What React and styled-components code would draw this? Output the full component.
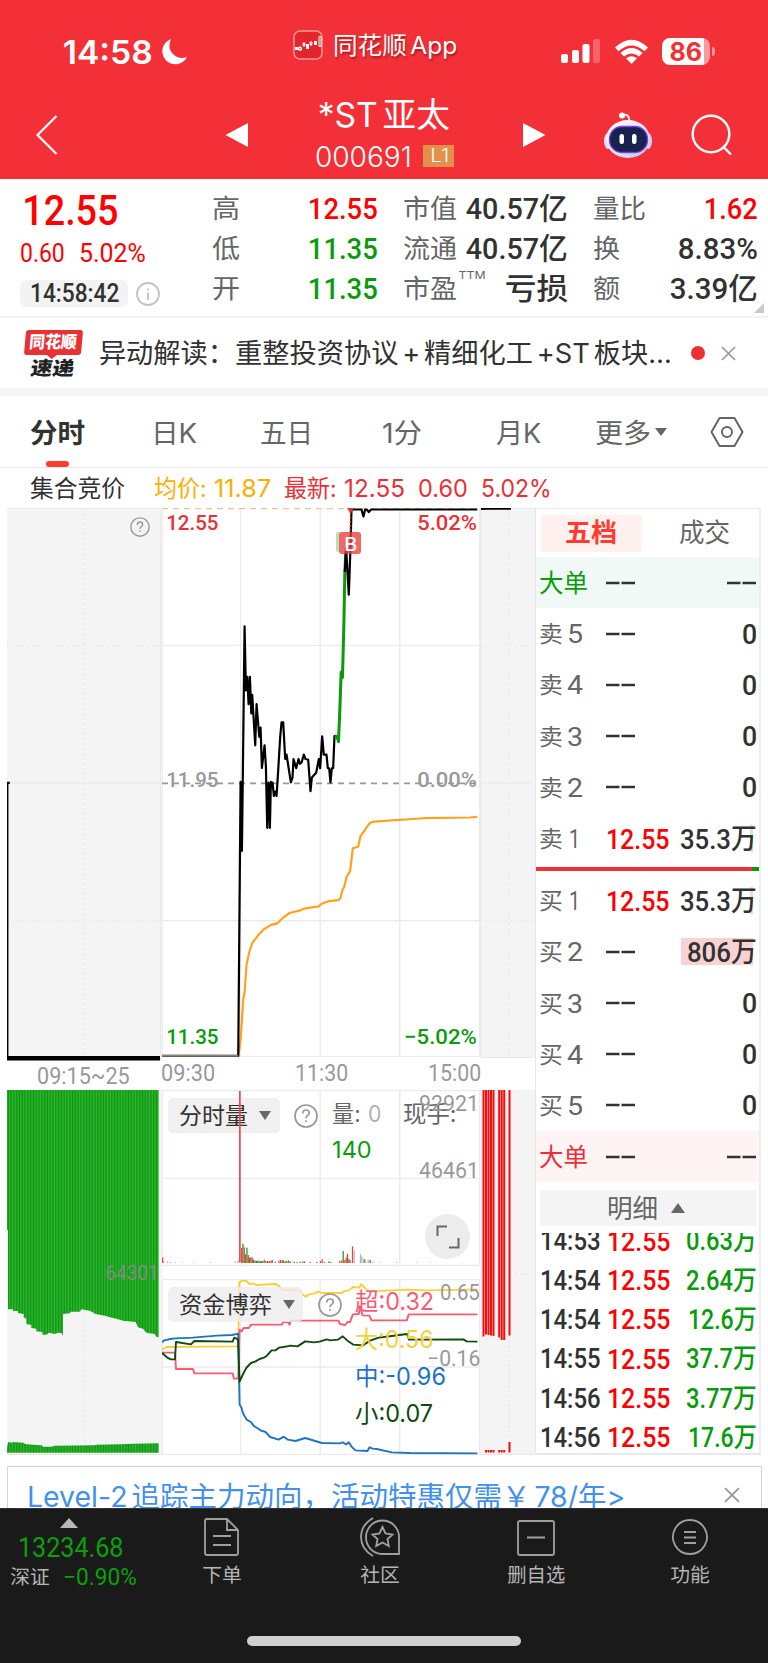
import React, { useLayoutEffect, useRef, useState } from "react";
import styled, { createGlobalStyle } from "styled-components";

const SANS = `Inter, "Noto Sans CJK SC", sans-serif`;
const DIN = `Roboto, "Noto Sans CJK SC", sans-serif`;
const RED = "#ff0000";
const CRIMSON = "#ec2f35";
const GREEN = "#089c0c";
const DARK = "#323232";
const GREY = "#666666";

const Global = createGlobalStyle`
  * { box-sizing: border-box; }
  body { margin: 0; background: #fff; font-family: ${SANS}; color: ${DARK}; }
  svg { display: block; flex: none; }
`;

/* Text squeezed or stretched to an exact column width */
const FitBox = styled.span`
  display: block;
  flex: none;
  width: ${(p) => p.$w}px;
  height: ${(p) => p.$size}px;
  margin-left: ${(p) => p.$ml || 0}px;
  font-family: ${(p) => (p.$din ? DIN : SANS)};
  font-size: ${(p) => p.$size}px;
  font-weight: ${(p) => p.$weight || 400};
  line-height: ${(p) => p.$size}px;
  color: ${(p) => p.$color || "inherit"};
`;
const FitInner = styled.span`
  display: inline-block;
  white-space: pre;
  word-spacing: -0.14em;
  transform-origin: 0 50%;
`;
function Fit({ w, size, ml, weight, color, din, dy = 1, children }) {
  const ref = useRef(null);
  const [scale, setScale] = useState(1);
  useLayoutEffect(() => {
    setScale((w + size * 0.08) / ref.current.offsetWidth);
  }, [w, size]);
  return (
    <FitBox $w={w} $size={size} $ml={ml} $weight={weight} $color={color} $din={din}>
      <FitInner ref={ref} style={{ transform: `translate(${-size * 0.04}px, ${dy}px) scaleX(${scale})` }}>
        {children}
      </FitInner>
    </FitBox>
  );
}

const Page = styled.div`
  width: 768px;
  height: 1663px;
  overflow: hidden;
  display: flex;
  flex-direction: column;
`;
const Line = styled.div`
  display: flex;
  align-items: center;
  height: ${(p) => p.$h}px;
  flex: none;
  padding-left: ${(p) => p.$pl || 0}px;
  margin-top: ${(p) => p.$mt || 0}px;
`;
const Gap = styled.div`
  flex: none;
  width: ${(p) => p.$w}px;
`;

/* ---------- header ---------- */
const Header = styled.header`
  height: 179px;
  flex: none;
  background: #f33037;
  color: #fff;
`;
const StatusBar = styled.div`
  display: flex;
  height: 91px;
  padding: 12px 0 0 64px;
  align-items: center;
`;
const AppTag = styled.div`
  display: flex;
  align-items: center;
  margin: -14px 0 0 106px;
  text-shadow: 1px 2px 2px rgba(90, 0, 0, 0.45);
`;
const Battery = styled.div`
  display: flex;
  align-items: center;
  justify-content: center;
  flex: none;
  width: 48px;
  height: 27px;
  margin-left: 13px;
  border-radius: 8px;
  background: linear-gradient(90deg, #fff 87%, #fa9a9e 87%);
  color: #f33037;
`;
const Nub = styled.div`
  width: 3px;
  height: 9px;
  margin-left: 2px;
  border-radius: 0 4px 4px 0;
  background: #fa9a9e;
`;
const NavBar = styled.div`
  display: flex;
  height: 88px;
  padding-left: 36px;
  align-items: center;
`;
const TitleBlock = styled.div`
  flex: none;
  width: 207px;
  display: flex;
  flex-direction: column;
`;
const Level = styled.div`
  display: flex;
  align-items: center;
  width: 31px;
  height: 22px;
  margin-left: 12px;
  padding-left: 8px;
  background: #e2904a;
`;
const NavTools = styled.div`
  display: flex;
  align-items: center;
  gap: 38px;
  margin-left: 57px;
`;

function StatusIcons() {
  return (
    <svg width="88" height="26" viewBox="0 0 88 26">
      <g fill="#fff">
        <rect x="0" y="15" width="7" height="9" rx="2" />
        <rect x="11" y="11" width="7" height="13" rx="2" />
        <rect x="21.500" y="5" width="7" height="19" rx="2" />
        <rect x="32" y="0" width="7" height="24" rx="2" opacity=".25" />
        <path d="M54 8.500Q70.500-7 87 8.500L83.500 12.200Q70.500 1 57.500 12.200Z" />
        <path d="M59.500 14Q70.500 4 81.500 14L78 17.500Q70.500 11.500 63 17.500Z" />
        <path d="M65 19.300Q70.500 15 76 19.300L70.500 25Z" />
      </g>
    </svg>
  );
}
function AppIcon() {
  return (
    <svg width="30" height="30" viewBox="0 0 30 30">
      <rect x="1" y="1" width="28" height="28" rx="6" fill="#e5252c" stroke="#f99" strokeWidth="1.500" />
      <g fill="#fff">
        <rect x="2" y="17" width="3" height="3" />
        <rect x="13" y="14" width="3" height="5" />
        <rect x="21" y="11" width="3" height="4" />
      </g>
      <g fill="none" stroke="#fff" strokeWidth="1">
        <path d="M7 16v5M5.500 17.500h3v2.500h-3ZM11 12v5M10 13.500h2v2h-2ZM18 12v4M17 12h2v2.500h-2ZM26 6.500h2v10h-2Z" />
      </g>
    </svg>
  );
}
function Robot() {
  return (
    <svg width="50" height="48" viewBox="0 0 50 48">
      <defs>
        <linearGradient id="shell" x1="0" y1="0" x2="1" y2="1">
          <stop offset="0" stopColor="#fff" />
          <stop offset="1" stopColor="#c3c8f0" />
        </linearGradient>
      </defs>
      <path d="M19 4q8-2 7 7" fill="none" stroke="#dfe1f8" strokeWidth="2" />
      <circle cx="19" cy="4.500" r="3" fill="#fff" />
      <ellipse cx="5" cy="30" rx="4" ry="8" fill="#d9dcf6" />
      <ellipse cx="45" cy="30" rx="4" ry="8" fill="#c9cdf2" />
      <ellipse cx="25" cy="28" rx="22" ry="19" fill="url(#shell)" />
      <rect x="6.500" y="15.500" width="38" height="26" rx="12.500" fill="#19224e" stroke="#7b3fe4" strokeWidth="1.300" />
      <rect x="16.500" y="23" width="4.500" height="10" rx="2.200" fill="#fff" />
      <rect x="29" y="23" width="4.500" height="10" rx="2.200" fill="#fff" />
    </svg>
  );
}

/* ---------- quote ---------- */
const Quote = styled.section`
  position: relative;
  display: flex;
  height: 139px;
  flex: none;
  border-bottom: 2px solid #f1f1f1;
`;
const QuoteMain = styled.div`
  width: 213px;
  padding: 9px 0 0 21px;
`;
const QuoteCols = styled.div`
  padding-top: 9px;
`;
const TimePill = styled.div`
  display: flex;
  align-items: center;
  width: 108px;
  height: 27px;
  margin-left: -1px;
  padding-left: 11px;
  border-radius: 7px;
  background: #f3f3f3;
`;
const Ttm = styled.div`
  align-self: flex-start;
  margin: 1px 0 0 3px;
  width: 27px;
`;
const Corner = styled.div`
  position: absolute;
  right: 4px;
  bottom: 3px;
  border-left: 10px solid transparent;
  border-bottom: 10px solid #c8c8c8;
`;

/* ---------- news ---------- */
const News = styled.section`
  display: flex;
  align-items: center;
  height: 78px;
  flex: none;
  padding: 0 0 0 25px;
  border-bottom: 8px solid #f4f4f4;
`;
const NewsBadge = styled.div`
  width: 57px;
  padding-top: 0;
`;
const BadgeTop = styled.div`
  position: relative;
  height: 25px;
  padding: 3px 0 0 5px;
  border-radius: 3px;
  background: #e83035;
  transform: skewX(-5deg);
  &::after {
    content: "";
    position: absolute;
    left: 23px;
    top: 25px;
    border: solid transparent;
    border-width: 0 5px;
    border-top: 4px solid #e83035;
  }
`;
const BadgeLow = styled.div`
  padding: 3px 0 0 7px;
  transform: skewX(-9deg);
`;
const Dot = styled.i`
  width: 14px;
  height: 14px;
  margin-left: 20px;
  border-radius: 50%;
  background: #ec2f32;
`;
const Cross = ({ size = 15 }) => (
  <svg width={size} height={size} viewBox="0 0 15 15">
    <path d="M1 1L14 14M14 1L1 14" stroke="#999" strokeWidth="1.700" fill="none" />
  </svg>
);

/* ---------- tabs ---------- */
const Tabs = styled.nav`
  position: relative;
  display: flex;
  align-items: center;
  height: 72px;
  flex: none;
  padding: 1px 0 0 31px;
  border-bottom: 1px solid #e9e9e9;
  color: ${GREY};
`;
const Underline = styled.i`
  position: absolute;
  left: 46px;
  bottom: 0;
  width: 23px;
  height: 6px;
  border-radius: 3px;
  background: #ff3a30;
`;
const Caret = styled.i`
  flex: none;
  width: 0;
  height: 0;
  margin-left: ${(p) => p.$ml || 0}px;
  border: solid transparent;
  border-width: 0 ${(p) => p.$s || 6.5}px;
  ${(p) => (p.$up ? "border-bottom" : "border-top")}: ${(p) => p.$h || 9}px solid ${(p) => p.$c || "#666"};
`;

/* ---------- charts ---------- */
const Board = styled.main`
  display: flex;
  height: 948px;
  flex: none;
  padding-left: 7px;
`;
const Column = styled.div`
  display: flex;
  flex-direction: column;
  width: ${(p) => p.$w}px;
  flex: none;
`;
const Pane = styled.div`
  position: relative;
  flex: none;
  height: ${(p) => p.$h}px;
  background: ${(p) => (p.$grey ? "#f4f4f4" : "#fff")};
`;
const Pin = styled.div`
  position: absolute;
  left: ${(p) => p.$x}px;
  top: ${(p) => p.$y}px;
  display: flex;
`;
const Picker = styled.div`
  position: absolute;
  left: 6px;
  top: 8px;
  display: flex;
  align-items: center;
  width: ${(p) => p.$w}px;
  height: 35px;
  padding-left: 12px;
  border-radius: 5px;
  background: rgba(236, 236, 236, 0.8);
`;
const Expand = styled.div`
  position: absolute;
  left: 263px;
  top: 124px;
  display: flex;
  align-items: center;
  justify-content: center;
  width: 45px;
  height: 45px;
  border-radius: 50%;
  background: #ececec;
`;
const Marker = styled.div`
  position: absolute;
  left: 177px;
  top: 24px;
  display: flex;
  align-items: center;
  justify-content: center;
  width: 22px;
  height: 22px;
  border-radius: 3px;
  background: rgba(236, 60, 62, 0.78);
  box-shadow: -4px -1px 0 -1px rgba(90, 190, 90, 0.45);
`;
const Help = ({ s = 24 }) => (
  <svg width={s} height={s} viewBox="0 0 24 24" fill="none" stroke="#999" strokeWidth="1.700">
    <circle cx="12" cy="12" r="11" />
    <path d="M8.800 9.500q0-3.500 3.200-3.500t3.200 3q0 1.700-1.700 2.600-1.500.900-1.500 2.600M12 16.300v1.700" />
  </svg>
);
const Plot = ({ box, h, w = 318, children }) => (
  <svg width={w} height={h} viewBox={box} preserveAspectRatio="none" fill="none">
    {children}
  </svg>
);
const Trace = ({ d, c, w = 2.2 }) => (
  <polyline points={d} stroke={c} strokeWidth={w} strokeLinejoin="round" vectorEffect="non-scaling-stroke" />
);
const Grid = ({ d, c = "#ebebeb", dash, w = 1.4 }) => (
  <path d={d} stroke={c} strokeWidth={w} strokeDasharray={dash} vectorEffect="non-scaling-stroke" />
);

const PRICE =
  "35,1502 264,1502 271,762 275,948 283,342 287,515 291,478 295,552 299,478 303,577 306,527 315,663 319,552 327,640 331,615 335,724 343,663 347,720 351,886 355,764 359,886 362,762 367,764 371,800 375,788 379,800 384,730 390,640 394,601 399,601 405,700 409,688 422,763 427,750 430,700 438,725 445,700 449,713 454,710 461,688 466,700 474,702 481,787 485,750 498,737 506,700 510,725 516,639 521,688 529,688 533,725 537,725 541,763 545,725 549,725 553,638 558,638";
const SURGE = "554,638 561,640 565,653 569,570 573,465 577,480 581,345 584,200 587,140";
const LIMIT = "584,195 588,130 596,256 601,130 604,26 634,26 640,45 645,26 650,26 656,33 663,26 982,26";
const AVERAGE =
  "264,1502 271,1460 279,1350 283,1330 289,1255 297,1222 306,1197 325,1175 341,1160 362,1148 381,1144 397,1130 418,1116 450,1109 462,1104 506,1098 514,1091 536,1084 565,1081 571,1076 577,1054 582,1046 590,1017 600,1003 608,941 624,937 631,909 650,884 659,873 672,869 820,860 960,858 982,856";
const BIG = "35,270 48,262 264,260 267,68 276,63 288,64 298,73 309,71 318,76 378,73 386,79 397,90 445,92 457,104 466,111 477,104 494,101 504,96 516,100 574,100 586,93 596,93 608,82 628,84 632,74 646,86 652,95 775,90 830,92 982,89";
const HUGE = "35,279 74,279 77,328 128,328 132,341 247,341 251,357 264,357 268,210 274,215 280,205 296,205 302,195 395,195 399,187 413,187 418,195 421,183 565,183 569,193 585,196 592,187 600,187 608,164 626,163 630,140 637,167 658,168 664,182 770,182 776,164 982,164";
const MID = "35,248 42,242 60,238 75,236 128,234 200,228 245,226 264,222 268,434 274,445 278,460 289,480 302,487 310,498 331,512 346,517 360,532 385,540 401,531 413,540 436,544 465,535 485,541 515,550 569,551 577,548 589,554 596,548 605,562 616,572 652,574 658,563 668,567 680,568 725,578 780,580 982,581";
const SMALL = "35,280 50,293 61,299 74,299 77,247 122,254 132,244 247,246 252,234 263,239 268,366 277,346 288,325 302,310 316,305 328,298 343,293 350,288 364,272 376,272 386,264 400,262 410,260 421,258 442,260 465,245 492,248 508,246 530,239 541,242 563,240 578,230 592,243 610,255 638,257 660,243 686,234 725,229 771,223 777,240 940,239 950,245 982,246";

const BARS = [
  [37, 17, 0], [40, 6, 1], [52, 5, 1], [60, 3, 1], [75, 2, 1], [95, 2, 1], [130, 2, 1], [180, 2, 1], [254, 5, 1], [262, 6, 1], [267, 15, 1],
  [274, 45, 0], [278, 58, 2], [282, 47, 0], [286, 26, 0], [290, 46, 2], [294, 24, 0], [298, 16, 2], [302, 18, 0], [306, 16, 0], [310, 10, 2], [314, 7, 0], [318, 7, 2], [322, 6, 2], [326, 7, 0], [330, 5, 2], [334, 6, 2], [338, 5, 2], [342, 10, 0], [347, 6, 0], [352, 6, 2], [357, 6, 0], [362, 7, 0], [366, 9, 0], [375, 4, 2], [386, 7, 0], [391, 9, 0], [396, 8, 2], [400, 8, 0], [405, 5, 2], [410, 6, 2], [415, 8, 0], [420, 5, 2], [432, 4, 2], [440, 3, 0], [450, 4, 2], [458, 5, 0], [463, 5, 0], [480, 3, 2], [500, 3, 0], [511, 6, 0], [516, 11, 0], [523, 3, 2], [536, 5, 2], [542, 3, 0], [569, 7, 0], [575, 8, 0], [579, 36, 2], [584, 9, 0], [588, 17, 0], [592, 28, 0], [596, 12, 2], [600, 8, 0], [607, 50, 0], [612, 38, 1], [631, 27, 1], [635, 20, 1], [642, 12, 2], [646, 8, 1], [654, 10, 1], [660, 9, 2], [668, 4, 1], [690, 2, 1], [740, 3, 1], [800, 2, 1], [840, 2, 1],
];
const BAR_COLORS = ["#f03e43", "#b4b4b4", "#12a018"];

const AUCTION_EDGE =
  "22,150 22,570 25,570 25,808 40,808 40,813 55,813 55,819 72,822 72,832 80,836 80,852 95,855 95,864 110,866 110,874 128,876 128,884 140,884 148,878 165,882 175,878 187,880 187,885 190,885 190,822 210,820 214,815 240,815 246,808 270,812 288,822 320,828 330,832 350,836 370,842 408,846 415,862 430,866 440,878 465,882 470,890 477,892 477,150";
const AUCTION_FOOT =
  "22,1238 22,1225 25,1206 38,1208 40,1206 72,1208 76,1212 100,1214 126,1216 130,1220 155,1220 165,1217 285,1216 290,1214 360,1213 400,1211 477,1210 477,1238";

const FlowTag = ({ y, w, c, children }) => (
  <Pin $x={194} $y={y}>
    <Fit w={w} size={24} color={c}>{children}</Fit>
  </Pin>
);
const Scale = ({ x, y, w, c = "#999", size = 21, weight = 500, children }) => (
  <Pin $x={x} $y={y}>
    <Fit w={w} size={size} din weight={weight} color={c}>{children}</Fit>
  </Pin>
);

function AuctionColumn() {
  return (
    <Column $w={155}>
      <Pane $h={553} $grey>
        <svg width="155" height="553" viewBox="0 0 155 553" fill="none">
          <path d="M0 .5H153.500V549M0 275H153" stroke="#e9e9e9" />
          <path d="M77.500 0V549M0 138H153M0 413H153" stroke="#e6e6e6" strokeDasharray="2 3" />
          <path d="M2 276V274.500H.700V548" stroke="#000" strokeWidth="1.500" />
          <path d="M0 550.300H153" stroke="#000" strokeWidth="4.500" />
        </svg>
        <Pin $x={123} $y={9}><Help s={20} /></Pin>
      </Pane>
      <Line $h={29} $pl={31}>
        <Fit w={91} size={23} din color="#999">09:15~25</Fit>
      </Line>
      <Pane $h={365} $grey>
        <svg width="153" height="365" viewBox="22 150 459 1095" fill="none">
          <defs>
            <pattern id="bars" width="4.670" height="20" patternUnits="userSpaceOnUse">
              <rect width="4.670" height="20" fill="#059b08" />
              <rect width="1.500" height="20" fill="#55bd58" />
            </pattern>
          </defs>
          <path d="M254 150V1245" stroke="#e3e3e3" strokeWidth="3" strokeDasharray="6 9" />
          <path d="M22 1244H481" stroke="#e4e4e4" strokeWidth="4" />
          <polygon points={AUCTION_EDGE} fill="url(#bars)" />
          <polygon points={AUCTION_FOOT} fill="url(#bars)" />
        </svg>
        <Scale x={99} y={172} w={52} c="#808c80" weight={400}>64301</Scale>
      </Pane>
    </Column>
  );
}

function MainColumn() {
  return (
    <Column $w={318}>
      <Pane $h={549}>
        <Plot box="35 22 955 1483" h={549}>
          <Grid d="M36 23V1504H989V23M271 23V1504M510 23V1504M749 23V1504M35 393H989M35 1137H989" />
          <Grid d="M35 766H989" c="#999" dash="6 5" w={1.8} />
          <Grid d="M35 23H989" c="#e3c69c" dash="6 5" w={1.8} />
          <Trace d={AVERAGE} c="#ffa21f" />
          <Trace d={PRICE} c="#000" />
          <Grid d="M35 1502H264" c="#8d8370" w={1.8} />
          <Trace d={SURGE} c="#0a9a0a" w={3} />
          <Trace d={LIMIT} c="#000" />
          <Grid d="M601 24V90" c="#e22" dash="2 2" />
          <path d="M591 22H611L601 38Z" fill="#e8363c" />
        </Plot>
        <Marker><Fit w={11} size={19} weight={500} color="#fff">B</Fit></Marker>
        <Scale x={5} y={4} w={51} c={CRIMSON}>12.55</Scale>
        <Scale x={256} y={4} w={58} c={CRIMSON}>5.02%</Scale>
        <Scale x={5} y={261} w={51}>11.95</Scale>
        <Scale x={256} y={261} w={58}>0.00%</Scale>
        <Scale x={5} y={518} w={51} c={GREEN}>11.35</Scale>
        <Scale x={243} y={518} w={71} c={GREEN}>−5.02%</Scale>
      </Pane>
      <Line $h={31}>
        <Fit w={52} size={23} din color="#999">09:30</Fit>
        <Fit ml={82} w={51} size={23} din color="#999">11:30</Fit>
        <Fit ml={82} w={51} size={23} din color="#999">15:00</Fit>
      </Line>
      <Line $h={2} />
      <Pane $h={176}>
        <Plot box="35 60 955 528" h={176}>
          <Grid d="M36 62V586H989V62ZM271 62V586M510 62V586M749 62V586M35 325H989" />
          {BARS.map(([x, h, c]) => (
            <rect key={x} x={x - 1.8} y={579 - h} width="3.800" height={h} fill={BAR_COLORS[c]} />
          ))}
        </Plot>
        <Picker $w={112}>
          <Fit w={67} size={23}>分时量</Fit>
          <Caret $ml={12} />
        </Picker>
        <Pin $x={77} $y={1}>
          <svg width="2" height="171"><rect width="1.700" height="171" fill="#f04a50" /></svg>
        </Pin>
        <Pin $x={132} $y={14}><Help /></Pin>
        <Pin $x={171} $y={12}>
          <Fit w={27} size={23} color={GREY}>量:</Fit>
          <Fit ml={9} w={12} size={23} color="#b0b0b0">0</Fit>
          <Fit ml={23} w={52} size={23} color={GREY}>现手:</Fit>
        </Pin>
        <Scale x={258} y={1} w={58} size={22.5} weight={400}>92921</Scale>
        <Pin $x={171} $y={48}><Fit w={38} size={23} color={GREEN}>140</Fit></Pin>
        <Scale x={258} y={68} w={58} size={22.5} weight={400}>46461</Scale>
        <Expand>
          <svg width="24" height="24" fill="none" stroke="#666" strokeWidth="2">
            <path d="M1.500 11V1.500H11M22.500 13V22.500H13" />
          </svg>
        </Expand>
      </Pane>
      <Line $h={13} />
      <Pane $h={176}>
        <Plot box="35 58 955 528" h={176}>
          <Grid d="M36 60V584H989V60ZM271 60V584M510 60V584M749 60V584M35 322H989" />
          <Trace d={BIG} c="#f8d038" w={1.9} />
          <Trace d={HUGE} c="#fb5a70" w={1.9} />
          <Trace d={MID} c="#1d74c3" w={1.9} />
          <Trace d={SMALL} c="#0d4c0d" w={1.9} />
        </Plot>
        <Picker $w={135}>
          <Fit w={91} size={23}>资金博弈</Fit>
          <Caret $ml={12} />
        </Picker>
        <Pin $x={156} $y={14}><Help /></Pin>
        <Scale x={279} y={2} w={38} weight={400} size={22}>0.65</Scale>
        <Scale x={266} y={68} w={51} weight={400} size={22}>−0.16</Scale>
        <FlowTag y={10} w={77} c="#fb5a70">超:0.32</FlowTag>
        <FlowTag y={48} w={77} c="#f8d038">大:0.56</FlowTag>
        <FlowTag y={85} w={89} c="#1d74c3">中:-0.96</FlowTag>
        <FlowTag y={122} w={76} c="#0d4c0d">小:0.07</FlowTag>
      </Pane>
    </Column>
  );
}

const AFTER_BARS = [
  [482.5, 1336.5], [485, 1334.500], [487.5, 1335], [490, 1335.500], [492.5, 1336], [498.2, 1337.500], [500.7, 1340], [503.2, 1340], [508.500, 1335.500],
];
function AfterColumn() {
  return (
    <Column $w={55}>
      <Pane $h={550} $grey>
        <svg width="55" height="550" fill="none">
          <path d="M0 .5H53M0 275H53M.5 0V550M0 549.500H53" stroke="#e9e9e9" />
          <path d="M29 0V550M0 138H53M0 413H53" stroke="#e6e6e6" strokeDasharray="2 3" />
          <path d="M1 .800L12 .300L31 .600" stroke="#000" strokeWidth="2.500" />
        </svg>
      </Pane>
      <Line $h={32} />
      <Pane $h={365} $grey>
        <svg width="55" height="365" viewBox="480 1090 55 365" fill="none">
          <path d="M480 1274H533" stroke="#e3e3e3" strokeDasharray="2 3" />
          <path d="M509 1340V1454" stroke="#e3e3e3" strokeDasharray="2 3" />
          <path d="M480 1454.500H534" stroke="#e4e4e4" />
          {AFTER_BARS.map(([x, y], i) => (
            <g key={x} fill="#fa0a0a">
              <rect x={x} y="1090" width="2" height={y - 1090} />
              {i > 0 && <rect x={x} y={i === 8 ? 1442 : 1450} width="2" height={i === 8 ? 10.5 : 2.5} />}
            </g>
          ))}
        </svg>
      </Pane>
    </Column>
  );
}

/* ---------- order book ---------- */
const Book = styled.aside`
  display: flex;
  flex-direction: column;
  width: 226px;
  height: 947px;
  border: 1px solid #e6e6e6;
  border-right: 2px solid #eee;
  border-bottom: 2px solid #e9e9e9;
`;
const BookTabs = styled.div`
  display: flex;
  align-items: center;
  height: 48px;
  flex: none;
  padding-left: 5px;
`;
const ActiveTab = styled.div`
  display: flex;
  align-items: center;
  width: 101px;
  height: 37px;
  padding-left: 25px;
  border-radius: 4px;
  background: #fff1f0;
`;
const BookRow = styled.div`
  position: relative;
  display: flex;
  align-items: center;
  justify-content: space-between;
  height: 51.200px;
  flex: none;
  padding: 0 3px 0 4px;
  background: ${(p) => p.$bg || "transparent"};
`;
const Cells = styled.div`
  display: flex;
  align-items: center;
`;
const Depth = styled.i`
  position: absolute;
  right: 6px;
  top: 12px;
  width: ${(p) => p.$w}px;
  height: 27px;
  background: ${(p) => p.$c};
`;
const Front = styled.div`
  position: relative;
`;
const Ratio = styled.div`
  height: 4px;
  flex: none;
  margin: 3px 0 4px;
  background: linear-gradient(90deg, #ef3035 216px, #0a9a0a 216px);
`;
const Detail = styled.div`
  display: flex;
  align-items: center;
  height: 36px;
  flex: none;
  margin: 8px 3px 7px 4px;
  padding-left: 68px;
  background: #f4f4f4;
`;
const Trades = styled.div`
  height: 220px;
  overflow: hidden;
`;
const Trade = styled.div`
  display: flex;
  align-items: center;
  justify-content: space-between;
  height: 39.300px;
  padding: 0 3px 0 5px;
  &:first-child { margin-top: -12px; }
`;

const Dashes = () => (
  <svg width="29" height="4"><path d="M0 2H13.500M15.500 2H29" stroke={DARK} strokeWidth="2.600" /></svg>
);
function Order({ side, n, price, vol, vw = 13, bar, barColor }) {
  return (
    <BookRow>
      {bar && <Depth $w={bar} $c={barColor} />}
      <Cells>
        <Fit w={22} size={23} color={GREY}>{side}</Fit>
        <Fit ml={n === 1 ? 8 : 6} w={n === 1 ? 9 : 14} size={25} color={GREY} din>{n}</Fit>
        <Gap $w={n === 1 ? 28 : 24} />
        {price ? <Fit w={61} size={28} din weight={500} color={RED}>{price}</Fit> : <Dashes />}
      </Cells>
      <Front><Fit w={vw} size={28} din weight={500}>{vol}</Fit></Front>
    </BookRow>
  );
}
function BigOrder({ bg, c }) {
  return (
    <BookRow $bg={bg}>
      <Cells>
        <Fit w={47} size={25} color={c}>大单</Fit>
        <Gap $w={19} />
        <Dashes />
      </Cells>
      <Dashes />
    </BookRow>
  );
}
const TRADES = [
  ["14:53", "0.63万", 69],
  ["14:54", "2.64万", 69],
  ["14:54", "12.6万", 67],
  ["14:55", "37.7万", 69],
  ["14:56", "3.77万", 69],
  ["14:56", "17.6万", 67],
];
function OrderBook() {
  return (
    <Book>
      <BookTabs>
        <ActiveTab><Fit w={50} size={26} weight={600} color="#ff3b30" dy={0}>五档</Fit></ActiveTab>
        <Fit ml={38} w={49} size={26} color={GREY} dy={0}>成交</Fit>
      </BookTabs>
      <BigOrder bg="#f0f9f5" c={GREEN} />
      {[5, 4, 3, 2].map((n) => <Order key={n} side="卖" n={n} vol="0" />)}
      <Order side="卖" n={1} price="12.55" vol="35.3万" vw={75} bar={3} barColor="#c8ebc8" />
      <Ratio />
      <Order side="买" n={1} price="12.55" vol="35.3万" vw={75} bar={3} barColor="#fcd4d6" />
      <Order side="买" n={2} vol="806万" vw={68} bar={72} barColor="#fbd2d4" />
      {[3, 4, 5].map((n) => <Order key={n} side="买" n={n} vol="0" />)}
      <BigOrder bg="#fef4f4" c={CRIMSON} />
      <Detail>
        <Fit w={49} size={26} color={GREY}>明细</Fit>
        <Caret $up $ml={14} $s={7} $h={10} />
      </Detail>
      <Trades>
        {TRADES.map(([t, v, w], i) => (
          <Trade key={i}>
            <Cells>
              <Fit w={59} size={27} din weight={500}>{t}</Fit>
              <Fit ml={8} w={61} size={28} din weight={500} color={RED}>12.55</Fit>
            </Cells>
            <Fit w={w} size={27} din weight={500} color={GREEN}>{v}</Fit>
          </Trade>
        ))}
      </Trades>
    </Book>
  );
}

/* ---------- promo and footer ---------- */
const Promo = styled.div`
  display: flex;
  height: 42px;
  flex: none;
  margin: 10px 6px 0 7px;
  padding: 15px 0 0 20px;
  border: solid #d4d4d4;
  border-width: 1.500px 1.500px 0;
  overflow: hidden;
`;
const PromoClose = styled.div`
  padding: 5px 0 0 100px;
`;
const Footer = styled.footer`
  display: flex;
  flex-direction: column;
  height: 155px;
  flex: none;
  background: #1a1a1a;
  border-top: 1px solid #333;
  color: #b5b5b5;
`;
const Dock = styled.div`
  display: flex;
  height: 127px;
`;
const IndexBlock = styled.div`
  display: flex;
  flex-direction: column;
  width: 144px;
  padding-top: 9px;
`;
const DockItem = styled.div`
  display: flex;
  flex-direction: column;
  align-items: center;
  gap: 8px;
  width: ${(p) => p.$w}px;
  padding-top: 8px;
`;
const HomeBar = styled.div`
  width: 274px;
  height: 10px;
  margin-left: 247px;
  border-radius: 5px;
  background: #d0d0d0;
`;
const DOCK_ICONS = {
  doc: <path d="M5 2H25L36 13V36Q36 38 34 38H5Q3 38 3 36V4Q3 2 5 2ZM25 2V13H36M11 19H29M11 28H29" />,
  star: <path d="M13 1Q1 8 1 20T13 39M6 20A16.500 16.500 0 0 1 39 20V37H22A16.500 16.500 0 0 1 6 20ZM22.500 10L25.500 16.500L32.500 17.500L27.500 22L28.800 29L22.500 25.500L16.200 29L17.500 22L12.500 17.500L19.500 16.500Z" />,
  minus: <path d="M4 4H36Q38 4 38 6V36Q38 38 36 38H4Q2 38 2 36V6Q2 4 4 4ZM11 20.500H29" />,
  menu: <path d="M20 3A17 17 0 1 1 19.900 3ZM14 15H26M14 20.500H26M14 26H26" />,
};
const Item = ({ icon, w, cell = 156, children }) => (
  <DockItem $w={cell}>
    <svg width="40" height="40" fill="none" stroke="#a0a0a0" strokeWidth="1.800">{DOCK_ICONS[icon]}</svg>
    <Fit w={w} size={19.5}>{children}</Fit>
  </DockItem>
);

const Stat = ({ a, b, bw, bc, c, cw = 52, d, dw, ttm, e, ew, f, fw, fc }) => (
  <Line $h={40}>
    <Fit w={26} size={26} color={GREY}>{a}</Fit>
    <Gap $w={70} />
    <Fit w={bw} size={30} din weight={500} color={bc}>{b}</Fit>
    <Gap $w={27} />
    <Fit w={cw} size={26} color={GREY}>{c}</Fit>
    {ttm && <Ttm><Fit w={26} size={11} color={GREY}>TTM</Fit></Ttm>}
    <Gap $w={111 - dw - (ttm ? 30 : 0)} />
    <Fit w={dw} size={30} din weight={500}>{d}</Fit>
    <Gap $w={27} />
    <Fit w={ew} size={26} color={GREY}>{e}</Fit>
    <Gap $w={163 - ew - fw} />
    <Fit w={fw} size={30} din weight={500} color={fc}>{f}</Fit>
  </Line>
);

export default function App() {
  return (
    <Page>
      <Global />
      <Header>
        <StatusBar>
          <Fit w={87} size={33} weight={600}>14:58</Fit>
          <Gap $w={10} />
          <svg width="26" height="26" viewBox="0 0 26 26">
            <path d="M10 0A13 13 0 1 0 26 18Q18 21 12 15T10 0Z" fill="#fff" />
          </svg>
          <AppTag>
            <AppIcon />
            <Fit ml={11} w={122} size={24}>同花顺 App</Fit>
          </AppTag>
          <Gap $w={105} />
          <StatusIcons />
          <Battery><Fit w={31} size={25} weight={700}>86</Fit></Battery>
          <Nub />
        </StatusBar>
        <NavBar>
          <svg width="22" height="40" fill="none" stroke="#fff" strokeWidth="2.200"><path d="M20.500 1L1.500 20L20.500 39" /></svg>
          <svg width="190" height="26"><path d="M190 1V25L167.500 13Z" fill="#fff" /></svg>
          <Gap $w={68} />
          <TitleBlock>
            <Line $h={42} $pl={3}><Fit w={130} size={34} dy={0}>*ST 亚太</Fit></Line>
            <Line $h={40}>
              <Fit w={95} size={28} weight={300}>000691</Fit>
              <Level><Fit w={17} size={18} weight={300} dy={0}>L1</Fit></Level>
            </Line>
          </TitleBlock>
          <svg width="23" height="26"><path d="M0 1V25L22.500 13Z" fill="#fff" /></svg>
          <NavTools>
            <Robot />
            <svg width="42" height="42" fill="none" stroke="#fff" strokeWidth="2.400">
              <circle cx="20" cy="20" r="18.300" /><path d="M32.500 33L40 40.500" />
            </svg>
          </NavTools>
        </NavBar>
      </Header>

      <Quote>
        <QuoteMain>
          <Line $h={42} $pl={3}><Fit w={93} size={43} din weight={500} color={RED}>12.55</Fit></Line>
          <Line $h={30} $mt={7}>
            <Fit w={43} size={26} din color={RED}>0.60</Fit>
            <Fit ml={16} w={65} size={26} din color={RED}>5.02%</Fit>
          </Line>
          <Line $h={29} $mt={12}>
            <TimePill><Fit w={87} size={25} din weight={500} dy={0}>14:58:42</Fit></TimePill>
            <Gap $w={8} />
            <svg width="24" height="24" fill="none" stroke="#c2c2c2" strokeWidth="1.800">
              <circle cx="12" cy="12" r="11" /><path d="M12 10.500V18M12 6.500V8.500" />
            </svg>
          </Line>
        </QuoteMain>
        <QuoteCols>
          <Stat a="高" b="12.55" bw={68} bc={RED} c="市值" d="40.57亿" dw={100} e="量比" ew={51} f="1.62" fw={52} fc={RED} />
          <Stat a="低" b="11.35" bw={68} bc={GREEN} c="流通" d="40.57亿" dw={100} e="换" ew={25} f="8.83%" fw={78} />
          <Stat a="开" b="11.35" bw={68} bc={GREEN} c="市盈" ttm d="亏损" dw={61} e="额" ew={25} f="3.39亿" fw={86} />
        </QuoteCols>
        <Corner />
      </Quote>

      <News>
        <NewsBadge>
          <BadgeTop><Fit w={46} size={17} weight={900} color="#fff">同花顺</Fit></BadgeTop>
          <BadgeLow><Fit w={42} size={19} weight={900} color="#222">速递</Fit></BadgeLow>
        </NewsBadge>
        <Fit ml={18} w={571} size={27.5}>异动解读：重整投资协议 + 精细化工 +ST 板块…</Fit>
        <Dot />
        <Gap $w={16} />
        <Cross />
      </News>

      <Tabs>
        <Fit w={53} size={27} weight={600} color={DARK}>分时</Fit>
        <Fit ml={68} w={44} size={27}>日K</Fit>
        <Fit ml={65} w={51} size={27}>五日</Fit>
        <Fit ml={71} w={38} size={27}>1分</Fit>
        <Fit ml={76} w={43} size={27}>月K</Fit>
        <Fit ml={56} w={54} size={27}>更多</Fit>
        <Caret $ml={5} $h={8} />
        <Gap $w={43} />
        <svg width="34" height="32" fill="none" stroke="#666" strokeWidth="2">
          <path d="M9.500 2H24.500L32.500 16L24.500 30H9.500L1.500 16Z" strokeLinejoin="round" />
          <circle cx="17" cy="16" r="5" />
        </svg>
        <Underline />
      </Tabs>

      <Line $h={40} $pl={31}>
        <Fit w={93} size={23.5}>集合竞价</Fit>
        <Fit ml={31} w={51} size={23.5} color="#ffae00">均价:</Fit>
        <Fit ml={9} w={55} size={24} color="#ffae00">11.87</Fit>
        <Fit ml={15} w={51} size={23.5} color={CRIMSON}>最新:</Fit>
        <Fit ml={9} w={59} size={24} color={CRIMSON}>12.55</Fit>
        <Fit ml={15} w={48} size={24} color={CRIMSON}>0.60</Fit>
        <Fit ml={15} w={69} size={24} color={CRIMSON}>5.02%</Fit>
      </Line>

      <Board>
        <AuctionColumn />
        <MainColumn />
        <AfterColumn />
        <OrderBook />
      </Board>

      <Promo>
        <Fit w={596} size={28} color="#4390ee">Level-2 追踪主力动向，活动特惠仅需￥ 78/年&gt;</Fit>
        <PromoClose><Cross size={16} /></PromoClose>
      </Promo>

      <Footer>
        <Dock>
          <IndexBlock>
            <Caret $up $ml={60} $s={9} $h={10} $c="#b8b8b8" />
            <Line $h={38} $pl={19}><Fit w={103} size={27.5} din color="#0aa00c">13234.68</Fit></Line>
            <Line $h={21} $pl={11}>
              <Fit w={38} size={19.5}>深证</Fit>
              <Fit ml={15} w={72} size={23} din color="#0aa00c">−0.90%</Fit>
            </Line>
          </IndexBlock>
          <Item icon="doc" w={38}>下单</Item>
          <Item icon="star" w={38} cell={160}>社区</Item>
          <Item icon="minus" w={57} cell={152}>删自选</Item>
          <Item icon="menu" w={38}>功能</Item>
        </Dock>
        <HomeBar />
      </Footer>
    </Page>
  );
}
